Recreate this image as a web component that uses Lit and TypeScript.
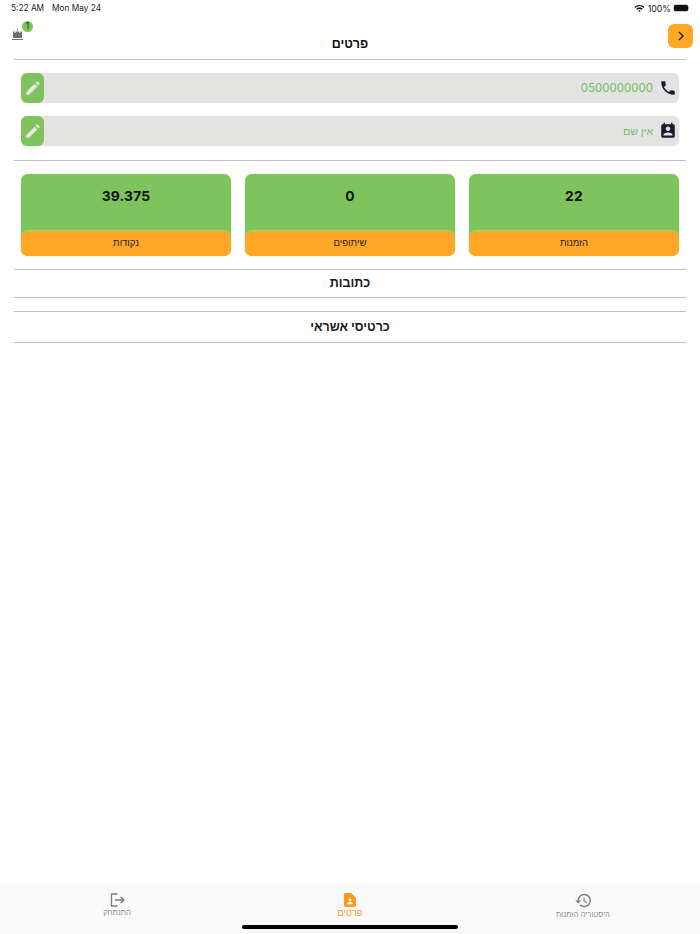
import { LitElement, html, css, svg } from "lit";
import { customElement } from "lit/decorators.js";

const pencil = svg`<path d="M3 17.25V21h3.75L17.81 9.94l-3.75-3.75L3 17.25zM20.71 7.04a1 1 0 0 0 0-1.41l-2.34-2.34a1 1 0 0 0-1.41 0l-1.83 1.83 3.75 3.75 1.83-1.83z"/>`;

@customElement("app-root")
export class AppRoot extends LitElement {
  static styles = css`
    :host {
      display: flex;
      flex-direction: column;
      height: 934px;
      width: 700px;
      background: #fff;
      font-family: Inter, "Liberation Sans", sans-serif;
      color: #111;
      overflow: hidden;
    }
    .status {
      height: 17px;
      flex: none;
      display: flex;
      align-items: center;
      justify-content: space-between;
      padding: 0 11px 1px 11px;
      font-size: 8.3px;
      color: #222;
      box-sizing: border-box;
    }
    .status-left { display: flex; gap: 8px; }
    .status-right { display: flex; align-items: center; gap: 2.5px; font-size: 8.8px; }
    .battery { display: flex; align-items: center; gap: 0.5px; }
    .battery-body { width: 14px; height: 6.5px; border-radius: 1.5px; background: #111; box-shadow: 0 0 0 0.5px #999; }
    .battery-tip { width: 1px; height: 3px; background: #aaa; }
    .header {
      height: 42px;
      flex: none;
      margin: 0 7px;
      display: grid;
      grid-template-columns: 1fr auto 1fr;
    }
    .cart { position: relative; width: 10px; height: 14px; margin: 10px 0 0 5px; }
    .cart svg { display: block; }
    .badge {
      position: absolute;
      left: 10px;
      top: -6.5px;
      width: 11px;
      height: 11px;
      border-radius: 50%;
      background: #7ec35b;
      font-size: 8.5px;
      line-height: 11px;
      text-align: center;
      color: #1c3010;
    }
    .title {
      font-size: 12.5px;
      font-weight: 700;
      align-self: end;
      line-height: 16px;
      margin-bottom: 7px;
    }
    .back {
      justify-self: end;
      margin-top: 7px;
      width: 25px;
      height: 24px;
      border-radius: 6px;
      background: #ffa726;
      display: flex;
      align-items: center;
      justify-content: center;
    }
    .content { flex: 1; padding: 0 14px; display: flex; flex-direction: column; }
    .line { height: 1px; background: #bdbcc8; flex: none; }
    .fields { padding: 13px 7px 14px; display: flex; flex-direction: column; gap: 13px; }
    .field {
      height: 30px;
      border-radius: 6px;
      background: #e3e3e2;
      display: flex;
      flex-direction: row-reverse;
      align-items: center;
      box-shadow: 0 0 2px rgba(0,0,0,0.08);
    }
    .field-icon { width: 18px; height: 18px; margin: 0 2px 0 6px; flex: none; fill: #1b1b2f; }
    .field-value { font-size: 11.5px; color: #74bf62; flex: 1; text-align: right; }
    .field-value.he { font-size: 10.5px; }
    .edit {
      width: 23px;
      height: 30px;
      border-radius: 6px;
      background: #7ec35b;
      display: flex;
      align-items: center;
      justify-content: center;
      flex: none;
    }
    .edit svg { fill: #e6e6e2; }
    .cards { padding: 13px 7px; display: grid; grid-template-columns: repeat(3, 1fr); gap: 14px; }
    .card {
      height: 82px;
      border-radius: 7px;
      background: #7ec35b;
      display: flex;
      flex-direction: column;
      overflow: hidden;
      box-shadow: 0 0 2px rgba(0,0,0,0.15);
    }
    .card-num {
      flex: 1;
      text-align: center;
      font-size: 13.8px;
      font-weight: 700;
      padding-top: 14px;
      line-height: 16px;
      letter-spacing: 0.2px;
    }
    .card-label {
      height: 25px;
      flex: none;
      background: #ffa726;
      border-radius: 7px 7px 0 0;
      box-shadow: 0 -1px 1px rgba(220,220,180,0.5);
      text-align: center;
      font-size: 9.5px;
      line-height: 24px;
      color: #222;
    }
    .section {
      text-align: center;
      font-size: 12.5px;
      font-weight: 700;
      color: #1a1a1a;
    }
    .s1 { height: 27px; line-height: 26px; }
    .s2 { height: 30px; line-height: 30px; }
    .gap { height: 13px; flex: none; }
    .tabs {
      height: 49px;
      flex: none;
      background: #f9f9f9;
      position: relative;
      display: grid;
      grid-template-columns: 234px 232px 234px;
      box-shadow: 0 -1px 1px rgba(0,0,0,0.01);
    }
    .tab {
      display: flex;
      flex-direction: column;
      align-items: center;
      padding-top: 8px;
      font-size: 7.6px;
      color: #8e8e8e;
      line-height: 10px;
      gap: 1px;
    }
    .tab svg { display: block; }
    .tab.active { color: #ff9a1f; font-size: 9.2px; font-weight: 500; }
    .tab.history { gap: 2px; }
    .home {
      position: absolute;
      left: 242px;
      bottom: 5px;
      width: 216px;
      height: 4px;
      border-radius: 2px;
      background: #000;
    }
  `;

  render() {
    const cards = [
      ["22", "הזמנות"],
      ["0", "שיתופים"],
      ["39.375", "נקודות"],
    ];
    return html`
      <div class="status">
        <div class="status-left"><span>5:22 AM</span><span>Mon May 24</span></div>
        <div class="status-right">
          <svg width="11" height="8" viewBox="0 0 24 18" fill="#111"><path d="M12 2.2C7.6 2.2 3.6 4 .7 6.9L2.9 9c2.3-2.3 5.5-3.8 9.1-3.8s6.800 1.500 9.100 3.800l2.200-2.100C20.400 4 16.400 2.200 12 2.200z"/><path d="M12 8c-2.800 0-5.400 1.100-7.200 3l2.200 2.100c1.300-1.300 3-2 5-2s3.700.7 5 2l2.200-2.100C17.400 9.100 14.800 8 12 8z"/><path d="M12 13.800c-1.200 0-2.300.5-3 1.300l3 2.900 3-2.900c-.7-.8-1.800-1.300-3-1.300z"/></svg>
          <span>100%</span>
          <span class="battery"><span class="battery-body"></span><span class="battery-tip"></span></span>
        </div>
      </div>
      <div class="header">
        <div>
          <div class="cart">
            <svg width="11" height="14" viewBox="0 0 11 14" fill="#6e6e6e"><path d="M1 4.500h1.600v1.500h1V4.500h3.800v1.500h1V4.500H10V11H1z"/><rect x="5" y="2" width="1" height="1.500"/><rect x="0" y="12" width="11" height="1"/></svg>
            <span class="badge">1</span>
          </div>
        </div>
        <div class="title" dir="rtl">פרטים</div>
        <div class="back">
          <svg width="12" height="12" viewBox="0 0 12 12" fill="none" stroke="#1b1b2f" stroke-width="1.400"><path d="M4 2l4 4-4 4"/></svg>
        </div>
      </div>
      <div class="content">
        <div class="line"></div>
        <div class="fields">
          <div class="field">
            <svg class="field-icon" viewBox="0 0 24 24"><path d="M6.620 10.790c1.440 2.830 3.760 5.140 6.590 6.590l2.200-2.200c.27-.27.67-.36 1.020-.24 1.120.37 2.330.57 3.570.57.550 0 1 .45 1 1V20c0 .55-.45 1-1 1C10.610 21 3 13.390 3 4c0-.55.450-1 1-1h3.500c.55 0 1 .45 1 1 0 1.250.2 2.450.57 3.570.11.350.03.740-.25 1.020l-2.200 2.200z"/></svg>
            <span class="field-value">0500000000</span>
            <span class="edit"><svg width="18" height="18" viewBox="0 0 24 24">${pencil}</svg></span>
          </div>
          <div class="field">
            <svg class="field-icon" viewBox="0 0 24 24"><path d="M19 3h-1V1h-2v2H8V1H6v2H5c-1.110 0-2 .9-2 2v14c0 1.100.89 2 2 2h14c1.100 0 2-.9 2-2V5c0-1.100-.9-2-2-2zm-7 3c1.660 0 3 1.340 3 3s-1.340 3-3 3-3-1.340-3-3 1.340-3 3-3zm6 12H6v-1c0-2 4-3.100 6-3.100s6 1.100 6 3.100v1z"/></svg>
            <span class="field-value he" dir="rtl">אין שם</span>
            <span class="edit"><svg width="18" height="18" viewBox="0 0 24 24">${pencil}</svg></span>
          </div>
        </div>
        <div class="line"></div>
        <div class="cards" dir="rtl">
          ${cards.map(
            ([n, l]) => html`<div class="card">
              <div class="card-num" dir="ltr">${n}</div>
              <div class="card-label">${l}</div>
            </div>`
          )}
        </div>
        <div class="line"></div>
        <div class="section s1" dir="rtl">כתובות</div>
        <div class="line"></div>
        <div class="gap"></div>
        <div class="line"></div>
        <div class="section s2" dir="rtl">כרטיסי אשראי</div>
        <div class="line"></div>
      </div>
      <div class="tabs">
        <div class="tab">
          <svg width="15" height="14" viewBox="0 0 15 14" fill="none" stroke="#7d7d7d" stroke-width="1.300" stroke-linecap="round" stroke-linejoin="round"><path d="M7 1H1.500v12H7"/><path d="M5.500 7h8.500M11 4.300L14 7l-3 2.700"/></svg>
          <span dir="rtl">התנתחק</span>
        </div>
        <div class="tab active">
          <svg width="14" height="14" viewBox="0 0 14 14" fill="#ff9a1f"><path d="M2.300 0h6L13 4.700V12.500A1.500 1.500 0 0 1 11.500 14h-9.200A1.500 1.500 0 0 1 1 12.500v-11A1.500 1.500 0 0 1 2.300 0z"/><circle cx="7" cy="7" r="1.400" fill="#fff"/><path d="M4.200 11.300v-.8c0-.9 1.800-1.500 2.800-1.500s2.800.6 2.800 1.500v.8z" fill="#fff"/></svg>
          <span dir="rtl">פרטים</span>
        </div>
        <div class="tab history">
          <svg width="17" height="15" viewBox="1 2 22 20" fill="#7d7d7d"><path d="M13 3a9 9 0 0 0-9 9H1l3.890 3.890.07.140L9 12H6a7 7 0 1 1 2.050 4.950l-1.420 1.420A8.950 8.950 0 0 0 13 21a9 9 0 0 0 0-18zm-1 5v5l4.280 2.540.72-1.210-3.500-2.080V8H12z"/></svg>
          <span dir="rtl">היסטוריה הזמנות</span>
        </div>
        <div class="home"></div>
      </div>
    `;
  }
}
